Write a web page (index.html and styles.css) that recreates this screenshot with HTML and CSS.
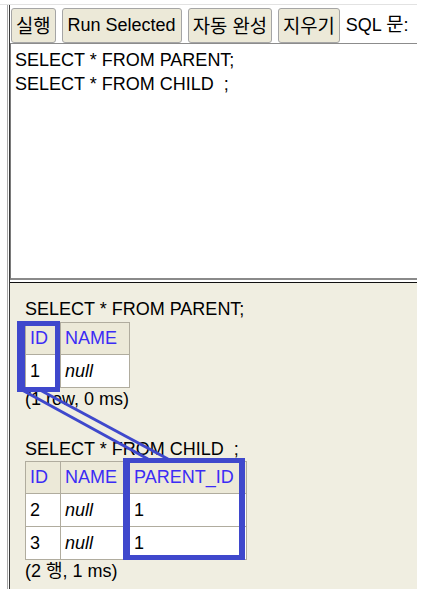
FILE: index.html
```html
<!DOCTYPE html>
<html lang="ko">
<head>
<meta charset="utf-8">
<title>H2 Console</title>
<link rel="stylesheet" href="styles.css">
</head>
<body>
<div class="page">
  <div class="topline"></div>
  <div class="frame">
    <div class="inner">
      <div class="toolbar">
        <button class="btn"><span class="ko">실행</span></button>
        <button class="btn en">Run Selected</button>
        <button class="btn"><span class="ko">자동 완성</span></button>
        <button class="btn"><span class="ko">지우기</span></button>
        <span class="label">SQL <span class="ko">문</span>:</span>
      </div>
      <div class="editor">
        <div class="code">SELECT * FROM PARENT;</div>
        <div class="code">SELECT * FROM CHILD&nbsp; ;</div>
      </div>
      <div class="gap"></div>
      <div class="results">
        <div class="query">SELECT * FROM PARENT;</div>
        <table class="grid">
          <tr><th>ID</th><th>NAME</th></tr>
          <tr><td>1</td><td><i>null</i></td></tr>
        </table>
        <div class="stat">(1 row, 0 ms)</div>
        <div class="query second">SELECT * FROM CHILD&nbsp; ;</div>
        <table class="grid">
          <tr><th>ID</th><th>NAME</th><th>PARENT_ID</th></tr>
          <tr><td>2</td><td><i>null</i></td><td>1</td></tr>
          <tr><td>3</td><td><i>null</i></td><td>1</td></tr>
        </table>
        <div class="stat">(2 <span class="ko">행</span>, 1 ms)</div>
      </div>
    </div>
  </div>
  <svg class="overlay" width="423" height="597" viewBox="0 0 423 597">
    <g fill="#3f48cc">
      <rect x="17" y="321" width="8" height="71"/>
      <rect x="55" y="321" width="5" height="71"/>
      <rect x="17" y="321" width="43" height="5"/>
      <rect x="17" y="387" width="43" height="5"/>
      <rect x="123" y="458" width="7" height="102"/>
      <rect x="239" y="458" width="6" height="102"/>
      <rect x="123" y="458" width="122" height="5"/>
      <rect x="123" y="555" width="122" height="5"/>
    </g>
    <g stroke="#3f48cc" stroke-width="3" fill="none">
      <line x1="22" y1="390" x2="148" y2="459"/>
      <line x1="40" y1="390" x2="168" y2="459"/>
    </g>
  </svg>
</div>
</body>
</html>
```
FILE: styles.css
```css
html, body {
  margin: 0;
  padding: 0;
  background: #ffffff;
}
body {
  font-family: "Liberation Sans", Arial, "Noto Sans CJK KR", sans-serif;
  font-size: 18px;
  color: #000;
}
.ko {
  font-family: "Noto Sans CJK KR", sans-serif;
  font-size: 18.8px;
  line-height: 1;
}
.page {
  position: relative;
  width: 423px;
  height: 597px;
  overflow: hidden;
}
.topline {
  margin-top: 4px;
  width: 417px;
  height: 1px;
  background: #e2e2e2;
}
.frame {
  margin-left: 7px;
  width: 409px;
  border-left: 1px solid #a8a8a8;
  padding-left: 1px;
}
.inner {
  border-left: 1px solid #3a3a3a;
  width: 407px;
}
.toolbar {
  display: flex;
  align-items: flex-start;
  gap: 6px;
  padding: 3px 0 0 1px;
  height: 35px;
  white-space: nowrap;
}
.btn {
  flex: none;
  white-space: nowrap;
  font-family: "Liberation Sans", Arial, "Noto Sans CJK KR", sans-serif;
  font-size: 18px;
  height: 35px;
  padding: 0 4px;
  margin: 0;
  background: #ece9d8;
  border: 1px solid #a5a5a5;
  border-radius: 3px;
  color: #000;
  line-height: 33px;
  display: flex;
  align-items: center;
}
.btn.en {
  padding: 0 5px;
}
.label {
  flex: none;
  white-space: nowrap;
  line-height: 35px;
}
.editor {
  height: 230px;
  border-top: 1px solid #8c8c8c;
  border-left: 1px solid #7a7a7a;
  border-bottom: 2px solid #8a8a8a;
  padding: 4px 0 0 4px;
  line-height: 24px;
  background: #fff;
}
.code {
  white-space: pre;
}
.gap {
  height: 2px;
  background: #fff;
  border-bottom: 1px solid #111;
}
.results {
  background: #f0eee1;
  height: 306px;
  padding: 15px 0 0 15px;
  box-sizing: border-box;
  line-height: 22px;
}
.query {
  white-space: pre;
  height: 24px;
}
.query.second {
  margin-top: 28px;
  height: 23px;
}
.grid {
  border-collapse: collapse;
  background: #fff;
}
.grid th, .grid td {
  border: 1px solid #b0ac9e;
  padding: 5px 12px 5px 4px;
  line-height: 21px;
  text-align: left;
  font-weight: normal;
  height: 21px;
}
.grid th {
  background: #ece9d8;
  color: #3b2cf5;
}
.grid td {
  padding-top: 6px;
  padding-bottom: 5px;
}
.stat {
  height: 22px;
  padding-top: 0;
}
.stat .ko {
  font-size: 18px;
}
.overlay {
  position: absolute;
  left: 0;
  top: 0;
  pointer-events: none;
}
```
